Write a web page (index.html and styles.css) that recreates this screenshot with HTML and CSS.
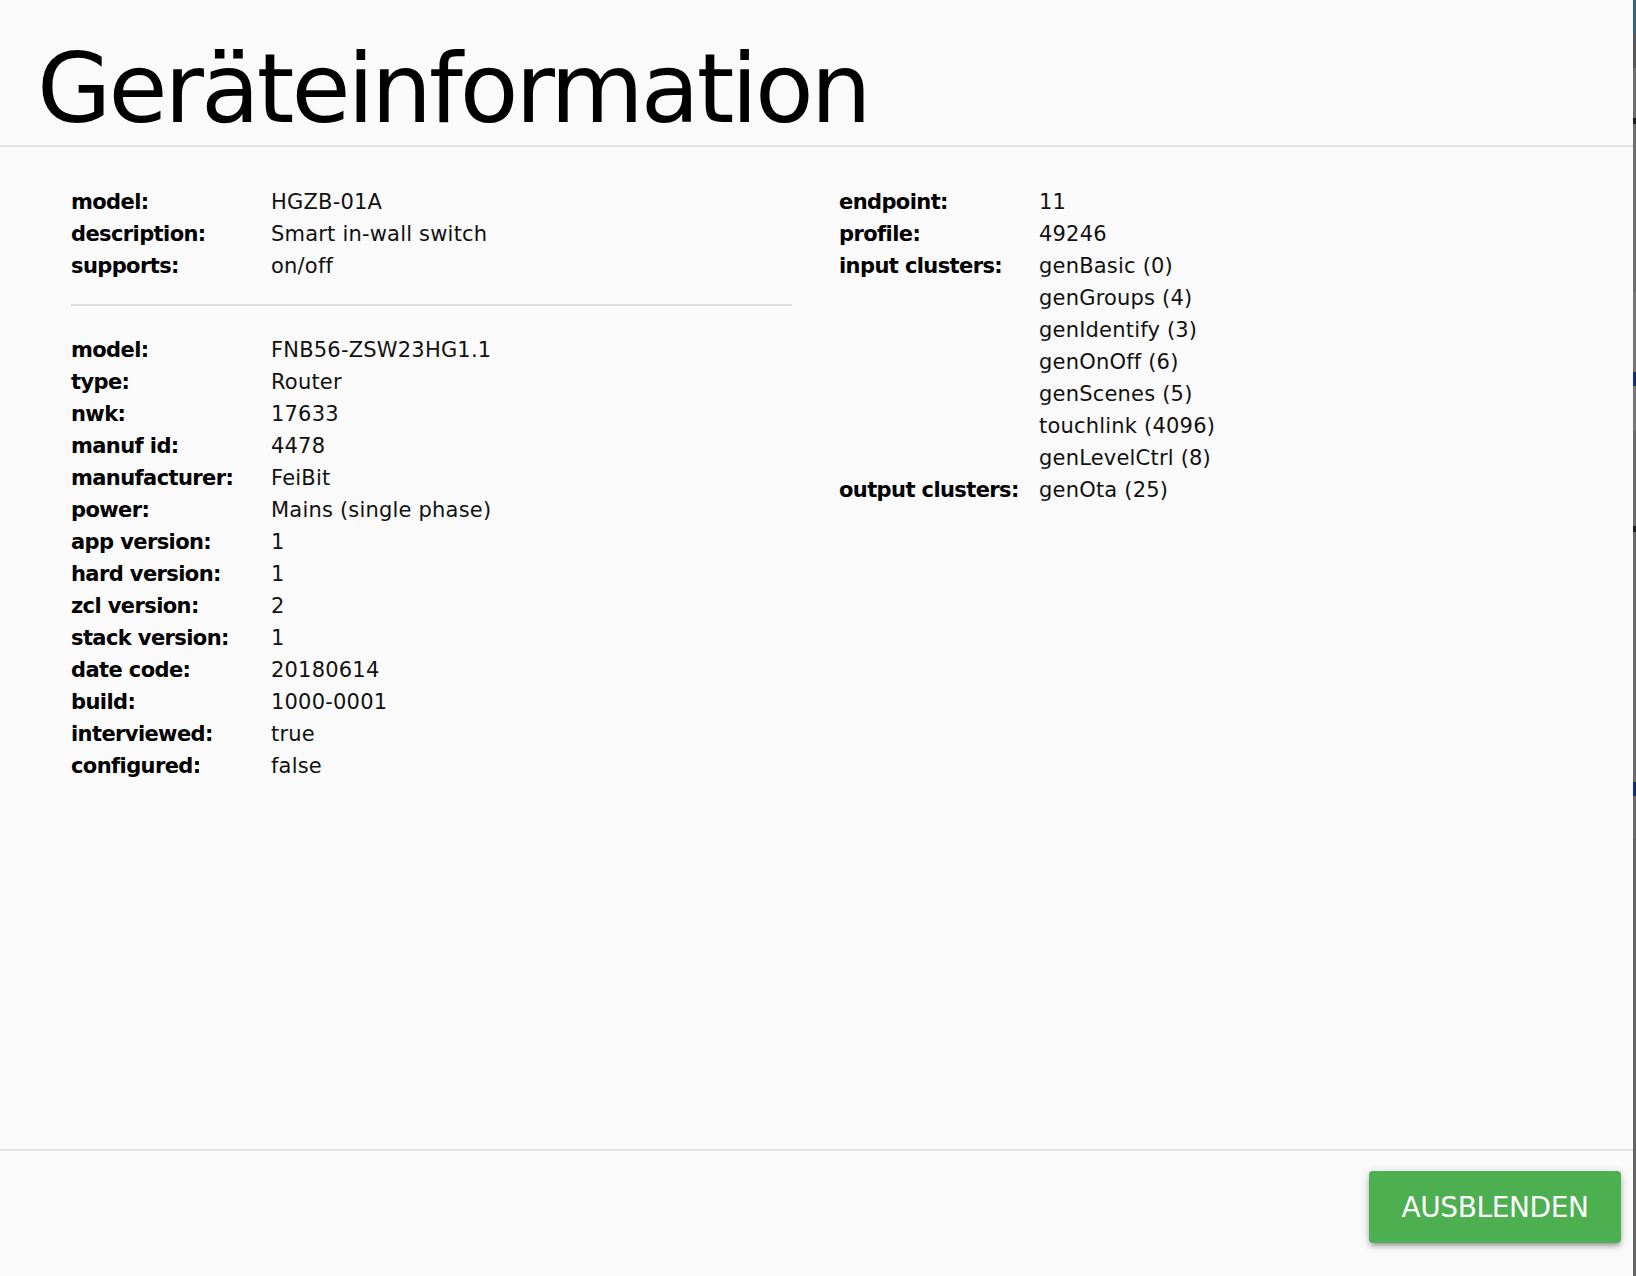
FILE: index.html
```html
<!DOCTYPE html>
<html>
<head>
  <meta charset="utf-8">
  <link rel="stylesheet" href="styles.css">
</head>
<body>
  <div class="modal">
    <div class="modal-header">
      <h4 class="title">Geräteinformation</h4>
    </div>

    <div class="modal-content">
      <div class="col">
        <div class="props">
          <span class="key">model:</span><span class="val">HGZB-01A</span>
          <span class="key">description:</span><span class="val">Smart in-wall switch</span>
          <span class="key">supports:</span><span class="val">on/off</span>
        </div>
        <hr class="sep">
        <div class="props">
          <span class="key">model:</span><span class="val">FNB56-ZSW23HG1.1</span>
          <span class="key">type:</span><span class="val">Router</span>
          <span class="key">nwk:</span><span class="val">17633</span>
          <span class="key">manuf id:</span><span class="val">4478</span>
          <span class="key">manufacturer:</span><span class="val">FeiBit</span>
          <span class="key">power:</span><span class="val">Mains (single phase)</span>
          <span class="key">app version:</span><span class="val">1</span>
          <span class="key">hard version:</span><span class="val">1</span>
          <span class="key">zcl version:</span><span class="val">2</span>
          <span class="key">stack version:</span><span class="val">1</span>
          <span class="key">date code:</span><span class="val">20180614</span>
          <span class="key">build:</span><span class="val">1000-0001</span>
          <span class="key">interviewed:</span><span class="val">true</span>
          <span class="key">configured:</span><span class="val">false</span>
        </div>
      </div>

      <div class="col">
        <div class="props">
          <span class="key">endpoint:</span><span class="val">11</span>
          <span class="key">profile:</span><span class="val">49246</span>
          <span class="key">input clusters:</span>
          <span class="val list">
            <span>genBasic (0)</span>
            <span>genGroups (4)</span>
            <span>genIdentify (3)</span>
            <span>genOnOff (6)</span>
            <span>genScenes (5)</span>
            <span>touchlink (4096)</span>
            <span>genLevelCtrl (8)</span>
          </span>
          <span class="key">output clusters:</span><span class="val">genOta (25)</span>
        </div>
      </div>
    </div>

    <div class="modal-footer">
      <button class="btn btn-green">Ausblenden</button>
    </div>
  </div>

  <!-- the page behind the dialog shows through on the right -->
  <div class="edge"></div>
</body>
</html>
```

FILE: styles.css
```css
* {
  margin: 0;
  padding: 0;
  box-sizing: border-box;
}

body {
  width: 100%;
  height: 100vh;
  display: flex;
  overflow: hidden;
  background: #fafafa;
  color: #111;
  font-family: 'DejaVu Sans', 'Liberation Sans', sans-serif;
}

.modal {
  flex: 1;
  display: flex;
  flex-direction: column;
  background: #fafafa;
}

.modal-header {
  height: 147px;
  padding: 41px 0 0 37px;
  border-bottom: 2px solid #e2e2e2;
  flex-shrink: 0;
}

.title {
  font-size: 96px;
  line-height: 96px;
  font-weight: normal;
  letter-spacing: -3px;
  color: #000;
}

.modal-content {
  flex: 1;
  display: grid;
  grid-template-columns: 721px 1fr;
  gap: 47px;
  padding: 39px 0 0 71px;
  min-height: 0;
}

.props {
  display: grid;
  grid-template-columns: 200px 1fr;
  align-items: start;
  font-size: 21px;
  line-height: 32px;
}

.key {
  font-weight: bold;
  letter-spacing: -0.6px;
  color: #000;
}

.val {
  letter-spacing: 0.2px;
}

.val.list {
  display: flex;
  flex-direction: column;
}

.sep {
  border: none;
  height: 2px;
  background: #e0e0e0;
  margin: 22px 0 28px;
}

.modal-footer {
  border-top: 2px solid #e2e2e2;
  padding: 20px 12px 33px;
  display: flex;
  justify-content: flex-end;
  flex-shrink: 0;
}

.btn {
  width: 252px;
  height: 72px;
  border: none;
  border-radius: 4px;
  font-family: inherit;
  font-size: 28px;
  letter-spacing: -0.4px;
  text-transform: uppercase;
  color: #fff;
  cursor: pointer;
}

.btn-green {
  background: #4caf50;
  box-shadow: 0 4px 4px 0 rgba(0, 0, 0, 0.14),
              0 6px 2px -4px rgba(0, 0, 0, 0.12),
              0 2px 10px 0 rgba(0, 0, 0, 0.2);
}

.edge {
  width: 3px;
  flex-shrink: 0;
  background: linear-gradient(to bottom,
    #3c6283 0, #3c6283 33px,
    #575757 33px, #575757 68px,
    #6e6e6e 68px, #6e6e6e 118px,
    #1e1e1e 118px, #1e1e1e 124px,
    #6e6e6e 124px, #6e6e6e 292px,
    #777 292px, #777 372px,
    #1b2a8a 372px, #1b2a8a 386px,
    #777 386px, #777 430px,
    #6c6c6c 430px, #6c6c6c 526px,
    #1e1e1e 526px, #1e1e1e 532px,
    #6c6c6c 532px, #6c6c6c 782px,
    #1b2a8a 782px, #1b2a8a 796px,
    #6c6c6c 796px, #6c6c6c 838px,
    #666 838px);
}
```
